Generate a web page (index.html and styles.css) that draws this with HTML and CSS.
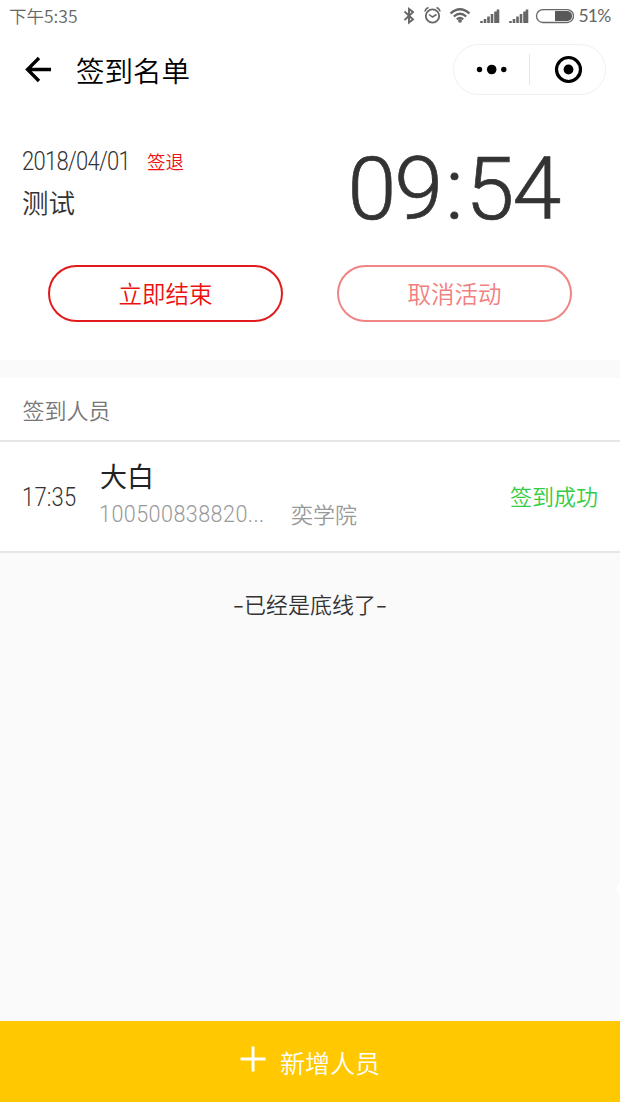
FILE: index.html
```html
<!DOCTYPE html>
<html lang="zh-CN">
<head>
<meta charset="utf-8">
<title>签到名单</title>
<link rel="stylesheet" href="styles.css">
</head>
<body>
<div class="app">
  <div class="status">
    <span class="status-time">下午5:35</span>
    <svg class="status-icons" width="170" height="32" viewBox="0 0 170 32" fill="none" stroke="#666">
      <path d="M0.500 11.500L9 19.500L5 22.500V9L9 12L0.500 20" stroke-width="1.900"/>
      <circle cx="28.500" cy="16" r="6.700" stroke-width="1.800"/>
      <path d="M25 14.500L28.500 17L32.500 14.500" stroke-width="1.500"/>
      <path d="M21 11.500Q21.500 8.500 24.500 7.500M32.500 7.500Q35.500 8.500 36 11.500" stroke-width="1.500"/>
      <path d="M46.500 13.500Q56 5 65.500 13.500M49.800 16.500Q56 11 62.200 16.500M52.800 19.300Q56 16.500 59.200 19.300" stroke-width="2.300"/>
      <circle cx="56" cy="20.800" r="1.900" fill="#666" stroke="none"/>
      <path d="M77.500 23V21M81 23V19M84.500 23V16.500M88 23V14M91.500 23V11.500M94 23V9.500M106.500 23V21M110 23V19M113.500 23V16.500M117 23V14M120.500 23V11.500M123 23V9.500" stroke-width="2.600"/>
      <rect x="132.500" y="9.700" width="37" height="12.800" rx="6.400" stroke-width="1.300"/>
      <path d="M151 11H164Q168 12 168 16T164 21H151Z" fill="#595959" stroke="none"/>
    </svg>
    <span class="status-battery">51%</span>
  </div>

  <header class="nav">
    <svg class="back" width="28" height="28" viewBox="0 0 28 28" fill="none" stroke="#000" stroke-width="3.300">
      <path d="M26 13.500H3M14 2L2.500 13.500L14 25"/>
    </svg>
    <h1 class="nav-title">签到名单</h1>
    <div class="capsule">
      <svg class="more" width="75" height="49" viewBox="0 0 75 49">
        <circle cx="25.500" cy="24.500" r="2.700"/><circle cx="37.700" cy="24.500" r="4.800"/><circle cx="49.800" cy="24.500" r="2.700"/>
      </svg>
      <i class="divider"></i>
      <svg width="74" height="49" viewBox="0 0 74 49">
        <circle cx="38.500" cy="24.500" r="12" fill="none" stroke="#000" stroke-width="3.200"/><circle cx="38.500" cy="24.500" r="4.900"/>
      </svg>
    </div>
  </header>

  <section class="event">
    <div class="event-top">
      <div class="event-info">
        <div class="event-line"><span class="date"><span class="narrow">2018/04/01</span></span><span class="tag">签退</span></div>
        <div class="event-name">测试</div>
      </div>
      <div class="clock">09<span class="colon">:</span>54</div>
    </div>
    <div class="actions">
      <button class="btn btn-end">立即结束</button>
      <button class="btn btn-cancel">取消活动</button>
    </div>
  </section>

  <section class="people">
    <h2 class="people-title">签到人员</h2>
    <div class="row">
      <span class="row-time"><span class="narrow">17:35</span></span>
      <div class="person">
        <div class="name">大白</div>
        <div class="meta"><span class="number"><span class="narrow">100500838820...</span></span><span class="school">奕学院</span></div>
      </div>
      <span class="result">签到成功</span>
    </div>
  </section>

  <main class="rest">
    <p class="end"><span class="dash">-</span>已经是底线了<span class="dash">-</span></p>
    <i class="edge"></i>
  </main>

  <footer class="add">
    <svg width="26" height="26" viewBox="0 0 26 26" fill="none" stroke="#fff" stroke-width="3"><path d="M0.500 13H25.500M13 0.500V25.500"/></svg>
    <span class="add-text">新增人员</span>
  </footer>
</div>
</body>
</html>
```

FILE: styles.css
```css
* { box-sizing: border-box; }
body { margin: 0; background: #fafafa; color: #333; font-family: "Noto Sans CJK SC", sans-serif; font-weight: 350; }
svg { display: block; flex: none; }
h1, h2, p { margin: 0; font-weight: inherit; }
.app { width: 620px; height: 1102px; display: flex; flex-direction: column; overflow: hidden; }
.narrow { display: inline-block; transform: scaleX(.88); transform-origin: left; white-space: nowrap; }

.status { height: 32px; flex: none; display: flex; background: #fff; padding: 0 9px; color: #666; line-height: 32px; white-space: nowrap; }
.status-time { font-size: 17.5px; width: 395px; flex: none; }
.status-battery { font-family: Lato, sans-serif; font-size: 17.5px; font-weight: 400; margin-left: 4.500px; letter-spacing: -.8px; }

.nav { height: 76px; flex: none; display: flex; align-items: flex-start; background: #fff; padding: 12px 14px 0 25px; }
.back { margin-top: 12px; }
.nav-title { margin-left: 23px; font-size: 28.5px; line-height: 51px; color: #000; }
.capsule { margin-left: auto; width: 153px; height: 51px; border: 1px solid #f0f0f0; border-radius: 26px; display: flex; align-items: center; }
.divider { width: 1px; height: 31px; background: #e4e4e4; }

.event { height: 252px; flex: none; background: #fff; padding: 0 48px 0 22px; }
.event-top { height: 157px; display: flex; justify-content: space-between; padding-top: 36px; }
.event-line { display: flex; height: 36px; line-height: 35px; }
.date { font-family: Roboto, sans-serif; font-size: 25px; letter-spacing: -.8px; width: 125px; }
.tag { font-size: 18.5px; color: #e11; }
.event-name { font-size: 26.5px; line-height: 44px; }
.clock { font-family: Roboto, sans-serif; font-size: 88px; line-height: 90px; letter-spacing: -2px; width: 224.500px; white-space: nowrap; -webkit-text-stroke: .7px #333; }
.colon { padding: 0 4px; }
.actions { display: flex; justify-content: space-between; padding-left: 26px; }
.btn { width: 235px; height: 57px; padding: 0 0 2px; border-radius: 29px; background: #fff; font: inherit; font-size: 23.500px; border: 2px solid; }
.btn-end { color: #e11; border-color: #e11b1b; }
.btn-cancel { color: #f28080; border-color: #f08585; }

.people { margin-top: 18px; flex: none; background: #fff; }
.people-title { height: 64px; border-bottom: 2px solid #e6e6e6; padding-left: 22.500px; font-size: 22px; line-height: 62px; color: #777; }
.row { height: 111px; border-bottom: 2px solid #e6e6e6; display: flex; align-items: center; padding: 0 22px; }
.row-time { width: 77px; padding-top: 2px; font-family: Roboto, sans-serif; font-size: 25px; letter-spacing: .2px; }
.person { flex: 1; margin-top: -3px; }
.name { padding-left: 1px; font-size: 27px; line-height: 38px; font-weight: 400; color: #222; }
.meta { display: flex; font-size: 22px; line-height: 37px; color: #999; }
.number { width: 192px; font-family: Roboto, sans-serif; font-size: 24.5px; line-height: 38px; letter-spacing: .5px; }
.result { margin-top: -3px; font-size: 22px; color: #3c4; }

.rest { flex: 1; position: relative; }
.end { padding-top: 32px; font-size: 22px; line-height: 36px; text-align: center; }
.dash { display: inline-block; width: 11px; transform: scaleX(1.5); }
.edge { position: absolute; right: 0; top: 331px; width: 3px; height: 10px; background: #fff; border-radius: 3px 0 0 3px; }

.add { height: 81px; flex: none; background: #ffc800; color: #fff; display: flex; align-items: flex-start; justify-content: center; padding-top: 25px; gap: 14px; }
.add-text { font-size: 25px; line-height: 32px; }
```
